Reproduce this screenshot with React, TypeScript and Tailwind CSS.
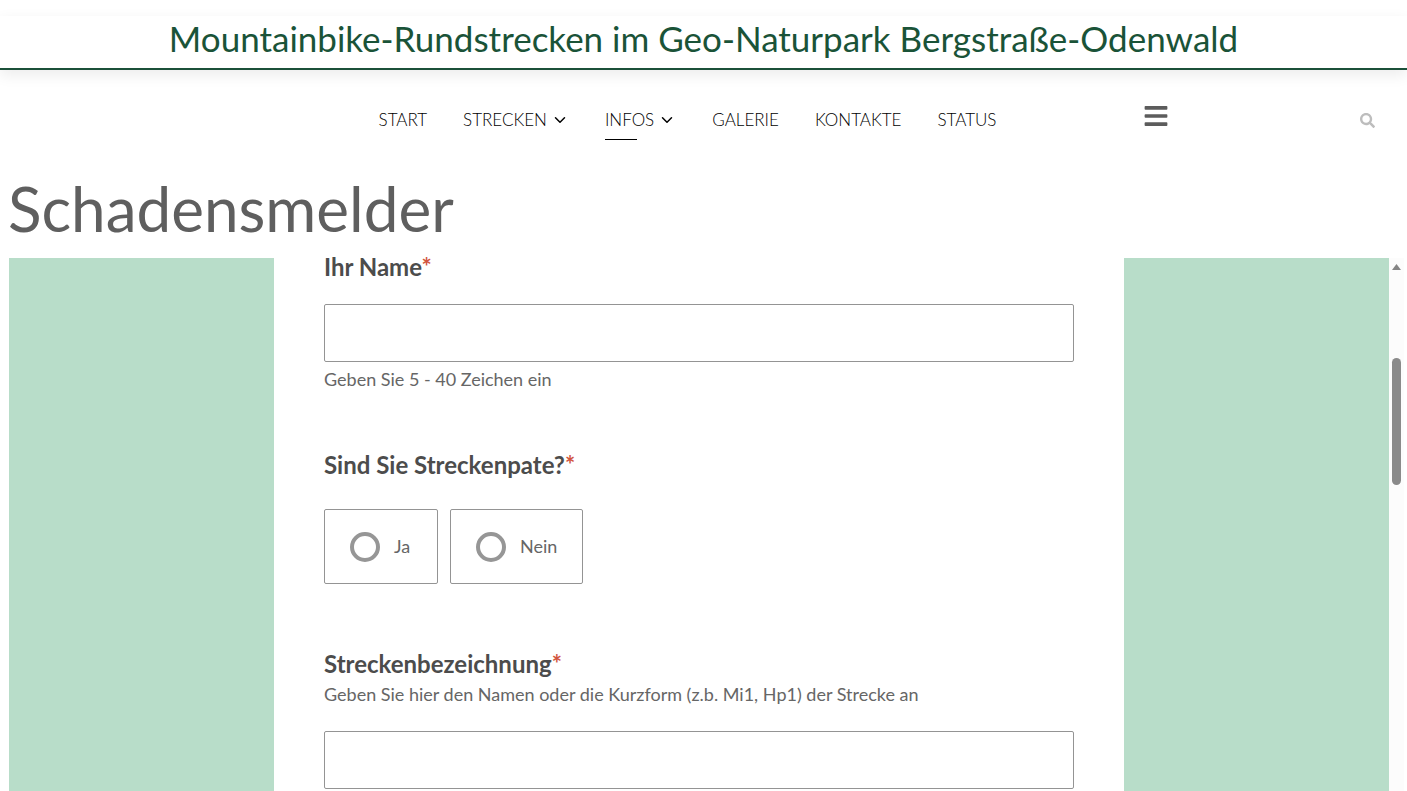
import React, { useState } from "react";
import { FaBars, FaSearch } from "react-icons/fa";
import { ChevronDown } from "lucide-react";

const navLinks = [
    { name: "START", href: "#start" },
    { name: "STRECKEN", href: "#strecken", hasMenu: true },
    { name: "INFOS", href: "#infos", hasMenu: true, active: true },
    { name: "GALERIE", href: "#galerie" },
    { name: "KONTAKTE", href: "#kontakte" },
    { name: "STATUS", href: "#status" },
];

const Required = () => <span className="text-[#d2553f]">*</span>;

const Header = () => (
    <header>
        <div className="pt-4">
            <div className="h-[54px] border-b-2 border-[#1b5039] flex items-center justify-center pb-2 shadow-[0_5px_14px_rgba(0,0,0,0.08)]">
                <p className="text-[35px] leading-[44px] text-[#1a5338] whitespace-nowrap">
                    Mountainbike-Rundstrecken im Geo-Naturpark Bergstraße-Odenwald
                </p>
            </div>
        </div>

        <div className="grid grid-cols-[1fr_auto_1fr] items-center h-[100px] pr-8">
            <span />
            <nav className="flex items-center gap-9">
                {navLinks.map((link) => (
                    <a
                        key={link.name}
                        href={link.href}
                        className="relative flex items-center gap-1 text-[17px] leading-[26px] font-light text-black"
                    >
                        {link.name}
                        {link.hasMenu && <ChevronDown size={18} strokeWidth={2} />}
                        {link.active && <span className="absolute left-0 top-8 w-8 h-px bg-black" />}
                    </a>
                ))}
            </nav>
            <div className="flex items-center justify-between pl-[147px]">
                <button aria-label="Menü" className="pb-2 text-[#5c5c5c]">
                    <FaBars size={26} />
                </button>
                <button aria-label="Suche" className="text-[#bdbdbd]">
                    <FaSearch size={15} />
                </button>
            </div>
        </div>
    </header>
);

const App = () => {
    const [name, setName] = useState("");
    const [sponsor, setSponsor] = useState("");
    const [route, setRoute] = useState("");

    return (
        <div className="min-h-screen flex flex-col bg-white font-['Lato','Open_Sans',sans-serif]">
            <Header />

            <h1 className="pl-2 h-[88px] text-[62px] leading-[76px] text-[#5f5f5f]">Schadensmelder</h1>

            <main className="flex-1 flex pl-[9px] pr-[3px]">
                <div className="flex-1 flex justify-center bg-[#b8ddc9]">
                    <form className="w-full max-w-[850px] bg-white px-[50px] text-[#4c4c4c]">
                        {/* Name */}
                        <div className="pb-[61px]">
                            <label htmlFor="name" className="block text-2xl leading-[18px] font-bold">
                                Ihr Name<Required />
                            </label>
                            <input
                                id="name"
                                type="text"
                                value={name}
                                onChange={(e) => setName(e.target.value)}
                                className="block w-full h-[58px] mt-7 px-4 text-lg border border-[#949494] rounded-xs"
                            />
                            <p className="mt-[5px] text-[18px] leading-6 text-[#666666]">Geben Sie 5 - 40 Zeichen ein</p>
                        </div>

                        {/* Streckenpate */}
                        <fieldset className="pb-16">
                            <legend className="text-2xl leading-[26px] font-bold pb-[31px]">
                                Sind Sie Streckenpate?<Required />
                            </legend>
                            <div className="flex gap-3">
                                {["Ja", "Nein"].map((option) => (
                                    <label
                                        key={option}
                                        className="flex items-center gap-3.5 h-[75px] min-w-[114px] px-[25px] text-[18px] text-[#666666] border border-[#949494] rounded-xs"
                                    >
                                        <input
                                            type="radio"
                                            name="sponsor"
                                            value={option}
                                            checked={sponsor === option}
                                            onChange={() => setSponsor(option)}
                                            className="appearance-none w-[30px] h-[30px] rounded-full border-4 border-[#969696] checked:bg-[#1a5338]"
                                        />
                                        {option}
                                    </label>
                                ))}
                            </div>
                        </fieldset>

                        {/* Strecke */}
                        <div>
                            <label htmlFor="route" className="block text-2xl leading-8 font-bold">
                                Streckenbezeichnung<Required />
                            </label>
                            <p id="route-hint" className="text-[18px] leading-7 text-[#666666]">
                                Geben Sie hier den Namen oder die Kurzform (z.b. Mi1, Hp1) der Strecke an
                            </p>
                            <input
                                id="route"
                                type="text"
                                aria-describedby="route-hint"
                                value={route}
                                onChange={(e) => setRoute(e.target.value)}
                                className="block w-full h-[58px] mt-[23px] px-4 text-lg border border-[#949494] rounded-xs"
                            />
                        </div>
                    </form>
                </div>

                {/* Scrollbar */}
                <div className="w-[15px] flex flex-col items-center bg-[#fcfcfc]">
                    <svg width="9" height="6" viewBox="0 0 9 6" className="mt-1.5" fill="#858585">
                        <path d="M4.5 0 9 6H0z" />
                    </svg>
                    <div className="w-[9px] h-[127px] mt-[88px] rounded-full bg-[#8a8a8a]" />
                </div>
            </main>
        </div>
    );
};

export default App;
